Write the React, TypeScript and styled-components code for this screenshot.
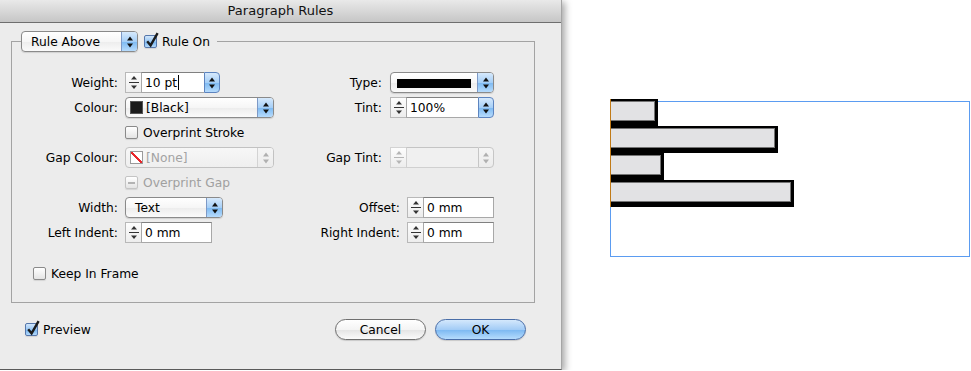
import { createGlobalStyle, css, styled } from "styled-components";

const GlobalStyle = createGlobalStyle`
  body {
    margin: 0;
    background: #fff;
    color: #000;
    font-family: "DejaVu Sans", "Liberation Sans", sans-serif;
    font-size: 12.25px;
  }
`;

const Page = styled.div`
  display: flex;
  align-items: flex-start;
`;

const Window = styled.div`
  width: 562px;
  height: 370px;
  box-sizing: border-box;
  display: flex;
  flex-direction: column;
  background: #ececec;
  border-right: 1px solid #a5a5a5;
  border-bottom: 1px solid #5a5a5a;
  box-shadow: 3px 2px 7px rgba(0, 0, 0, 0.35);
`;

const TitleBar = styled.div`
  height: 22px;
  border-bottom: 1px solid #6e6e6e;
  background: linear-gradient(#e9e9e9, #c6c6c6);
  text-align: center;
  line-height: 22px;
  font-size: 13px;
  color: #111;
`;

const Body = styled.div`
  padding: 8px 26px 0 11px;
`;

const Group = styled.fieldset`
  margin: 0;
  padding: 18px 0 16px;
  min-width: 0;
  border: 1px solid #a3a3a3;
`;

const GroupHead = styled.legend`
  margin-left: 9px;
  padding: 0 7px 0 0;
`;

const HeadInner = styled.div`
  display: flex;
  align-items: center;
  gap: 6px;
`;

const Row = styled.div<{ $cols: string }>`
  display: grid;
  grid-template-columns: ${(p) => p.$cols};
  align-items: center;
  height: 25px;
`;

const Label = styled.label<{ $pad?: number }>`
  text-align: right;
  padding-right: ${(p) => p.$pad ?? 7}px;
  white-space: nowrap;
  color: #000;
`;

const Cell = styled.div`
  display: flex;
  align-items: center;
`;

const Popup = styled.div<{ $w: number; $disabled?: boolean }>`
  width: ${(p) => p.$w}px;
  height: 21px;
  box-sizing: border-box;
  display: flex;
  align-items: stretch;
  border: 1px solid ${(p) => (p.$disabled ? "#c2c2c2" : "#8a8a8a")};
  border-radius: 4px;
  overflow: hidden;
  background: linear-gradient(#ffffff, #f6f6f6 50%, #ececec 51%, #fafafa);
  box-shadow: 0 1px 1px rgba(0, 0, 0, 0.12);
  color: ${(p) => (p.$disabled ? "#a3a3a3" : "#000")};
  ${(p) =>
    p.$disabled &&
    css`
      background: linear-gradient(#f7f7f7, #efefef);
      box-shadow: none;
    `}
`;

const PopupText = styled.span<{ $pad?: number }>`
  flex: 1;
  display: flex;
  align-items: center;
  gap: 3px;
  padding-left: ${(p) => p.$pad ?? 9}px;
  white-space: nowrap;
`;

const ArrowCap = styled.span<{ $disabled?: boolean; $joined?: boolean }>`
  width: 16px;
  flex: none;
  display: flex;
  align-items: center;
  justify-content: center;
  box-sizing: border-box;
  border-left: 1px solid #7d99c6;
  background: linear-gradient(#d6e9fc, #a6cff7 50%, #7cb9f2 51%, #b6dbfc);
  ${(p) =>
    p.$disabled &&
    css`
      border-left: 1px solid #d3d3d3;
      background: linear-gradient(#f5f5f5, #ececec);
    `}
  ${(p) =>
    p.$joined &&
    css`
      height: 21px;
      border: 1px solid ${p.$disabled ? "#c6c6c6" : "#5d84bf"};
      border-radius: 0 4px 4px 0;
    `}
`;

const Stepper = styled.span<{ $disabled?: boolean }>`
  width: 16px;
  height: 21px;
  box-sizing: border-box;
  flex: none;
  display: flex;
  align-items: center;
  justify-content: center;
  border: 1px solid ${(p) => (p.$disabled ? "#d3d3d3" : "#b8b8b8")};
  border-right: none;
  background: linear-gradient(#fdfdfd, #ededed);
`;

const TextField = styled.span<{ $w: number; $disabled?: boolean; $joined?: boolean }>`
  width: ${(p) => p.$w}px;
  height: 21px;
  box-sizing: border-box;
  display: flex;
  align-items: center;
  padding-left: 3px;
  border: 1px solid ${(p) => (p.$disabled ? "#d0d0d0" : "#a8a8a8")};
  border-top-color: ${(p) => (p.$disabled ? "#c4c4c4" : "#808080")};
  border-right: ${(p) => (p.$joined ? "none" : undefined)};
  background: ${(p) => (p.$disabled ? "#f0f0f0" : "#fff")};
`;

const Caret = styled.span`
  display: inline-block;
  width: 1px;
  height: 15px;
  margin-left: 1px;
  background: #000;
`;

const Swatch = styled.span<{ $none?: boolean }>`
  width: 13px;
  height: 13px;
  box-sizing: border-box;
  flex: none;
  border: 1px solid ${(p) => (p.$none ? "#9a9a9a" : "#555")};
  background: ${(p) =>
    p.$none
      ? "linear-gradient(to top right, #fff 44%, #e8262a 45%, #e8262a 57%, #fff 58%)"
      : "#1c1c1c"};
`;

const StrokeSample = styled.span`
  display: block;
  width: 74px;
  height: 9px;
  margin-top: 1px;
  background: #000;
`;

const CheckLine = styled.label<{ $disabled?: boolean; $inset?: number }>`
  display: flex;
  align-items: center;
  gap: 5px;
  padding-left: ${(p) => p.$inset ?? 0}px;
  color: ${(p) => (p.$disabled ? "#a0a0a0" : "#000")};
  white-space: nowrap;
`;

const Box = styled.span<{ $checked?: boolean; $disabled?: boolean }>`
  position: relative;
  width: 13px;
  height: 13px;
  box-sizing: border-box;
  flex: none;
  display: flex;
  align-items: center;
  justify-content: center;
  border: 1px solid ${(p) => (p.$disabled ? "#c4c4c4" : "#8a8a8a")};
  border-radius: 2px;
  background: linear-gradient(#ffffff, #e4e4e4);
  box-shadow: 0 1px 1px rgba(0, 0, 0, 0.1);
  ${(p) =>
    p.$checked &&
    css`
      border-color: #5677ab;
      background: linear-gradient(#d2e6fb, #98c7f4 50%, #74b3ef 51%, #b3d9fb);
    `}
`;

const Tick = styled.svg`
  position: absolute;
  left: 0;
  top: -4px;
  overflow: visible;
`;

const Dash = styled.span`
  width: 7px;
  height: 2px;
  background: #b3b3b3;
`;

const KeepRow = styled.div`
  display: flex;
  align-items: center;
  height: 25px;
  margin-top: 16px;
`;

const Footer = styled.div`
  display: flex;
  align-items: center;
  height: 21px;
  margin-top: 16px;
  padding: 0 9px 0 14px;
`;

const Buttons = styled.div`
  margin-left: auto;
  display: flex;
  gap: 9px;
`;

const PushButton = styled.button<{ $primary?: boolean }>`
  width: 91px;
  height: 21px;
  padding: 0;
  border: 1px solid #6f6f6f;
  border-radius: 11px;
  font: inherit;
  color: #000;
  background: linear-gradient(#ffffff, #f4f4f4 50%, #e3e3e3 51%, #fbfbfb);
  box-shadow: 0 1px 1px rgba(0, 0, 0, 0.15);
  ${(p) =>
    p.$primary &&
    css`
      border-color: #4a6ea8;
      background: linear-gradient(#d4e8fc, #a3ccf6 50%, #7ab7f1 51%, #b6dcfd);
    `}
`;

const Canvas = styled.div`
  margin: 101px 0 0 48px;
  width: 360px;
  height: 156px;
  box-sizing: border-box;
  border: 1px solid #5b9cf1;
`;

const Lines = styled.div`
  width: max-content;
  margin: -3px 0 0 -1px;
  display: flex;
  flex-direction: column;
  align-items: flex-start;
  border-left: 1px solid #c07a18;
`;

const RuleBar = styled.div`
  height: 27px;
  box-sizing: border-box;
  padding: 2px 3px 5px 0;
  background: #000;
`;

const TextBand = styled.div`
  height: 100%;
  box-sizing: border-box;
  background: #e2e2e4;
  border: 1px solid #747474;
  border-left: none;
`;

function Arrows({ disabled }: { disabled?: boolean }) {
  const c = disabled ? "#b0b0b0" : "#111";
  return (
    <svg width="6" height="12" viewBox="0 0 6 12">
      <polygon points="0,4.5 3,0.5 6,4.5" fill={c} />
      <polygon points="0,7.5 6,7.5 3,11.5" fill={c} />
    </svg>
  );
}

function StepIcon({ disabled }: { disabled?: boolean }) {
  const c = disabled ? "#b5b5b5" : "#333";
  return (
    <svg width="12" height="17" viewBox="0 0 12 17">
      <polygon points="3,5.5 6,2 9,5.5" fill={c} />
      <rect x="1" y="8" width="10" height="1" fill={c} />
      <polygon points="3,11.5 9,11.5 6,15" fill={c} />
    </svg>
  );
}

function Check({
  label,
  checked,
  mixed,
  disabled,
  inset,
}: {
  label: string;
  checked?: boolean;
  mixed?: boolean;
  disabled?: boolean;
  inset?: number;
}) {
  return (
    <CheckLine $disabled={disabled} $inset={inset}>
      <Box $checked={checked} $disabled={disabled}>
        {checked && (
          <Tick width="14" height="16" viewBox="0 0 14 16">
            <path
              d="M2.2 9.2 L5.6 13.4 L12.6 1.2"
              fill="none"
              stroke="#1b1b1b"
              strokeWidth="2.4"
            />
          </Tick>
        )}
        {mixed && <Dash />}
      </Box>
      {label}
    </CheckLine>
  );
}

function NumberField({
  value,
  width,
  combo,
  disabled,
  caret,
}: {
  value: string;
  width: number;
  combo?: boolean;
  disabled?: boolean;
  caret?: boolean;
}) {
  return (
    <Cell>
      <Stepper $disabled={disabled}>
        <StepIcon disabled={disabled} />
      </Stepper>
      <TextField $w={width} $disabled={disabled} $joined={combo}>
        {value}
        {caret && <Caret />}
      </TextField>
      {combo && (
        <ArrowCap $joined $disabled={disabled}>
          <Arrows disabled={disabled} />
        </ArrowCap>
      )}
    </Cell>
  );
}

const TOP_COLS = "113px 149px 116px 104px";
const LOWER_COLS = "113px 149px 133px 87px";

const lines = [47, 167, 53, 183];

export default function App() {
  return (
    <Page>
      <GlobalStyle />
      <Window>
        <TitleBar>Paragraph Rules</TitleBar>
        <Body>
          <Group>
            <GroupHead>
              <HeadInner>
                <Popup $w={117}>
                  <PopupText>Rule Above</PopupText>
                  <ArrowCap>
                    <Arrows />
                  </ArrowCap>
                </Popup>
                <Check label="Rule On" checked />
              </HeadInner>
            </GroupHead>

            <Row $cols={TOP_COLS}>
              <Label>Weight:</Label>
              <NumberField value="10 pt" width={63} combo caret />
              <Label $pad={8}>Type:</Label>
              <Popup $w={104}>
                <PopupText $pad={6}>
                  <StrokeSample />
                </PopupText>
                <ArrowCap>
                  <Arrows />
                </ArrowCap>
              </Popup>
            </Row>
            <Row $cols={TOP_COLS}>
              <Label>Colour:</Label>
              <Popup $w={149}>
                <PopupText $pad={4}>
                  <Swatch />
                  [Black]
                </PopupText>
                <ArrowCap>
                  <Arrows />
                </ArrowCap>
              </Popup>
              <Label $pad={8}>Tint:</Label>
              <NumberField value="100%" width={74} combo />
            </Row>
            <Row $cols={TOP_COLS}>
              <span />
              <Check label="Overprint Stroke" />
            </Row>
            <Row $cols={TOP_COLS}>
              <Label>Gap Colour:</Label>
              <Popup $w={149} $disabled>
                <PopupText $pad={4}>
                  <Swatch $none />
                  [None]
                </PopupText>
                <ArrowCap $disabled>
                  <Arrows disabled />
                </ArrowCap>
              </Popup>
              <Label $pad={8}>Gap Tint:</Label>
              <NumberField value="" width={74} combo disabled />
            </Row>
            <Row $cols={TOP_COLS}>
              <span />
              <Check label="Overprint Gap" mixed disabled />
            </Row>
            <Row $cols={LOWER_COLS}>
              <Label>Width:</Label>
              <Popup $w={98}>
                <PopupText>Text</PopupText>
                <ArrowCap>
                  <Arrows />
                </ArrowCap>
              </Popup>
              <Label>Offset:</Label>
              <NumberField value="0 mm" width={71} />
            </Row>
            <Row $cols={LOWER_COLS}>
              <Label>Left Indent:</Label>
              <NumberField value="0 mm" width={71} />
              <Label>Right Indent:</Label>
              <NumberField value="0 mm" width={71} />
            </Row>

            <KeepRow>
              <Check label="Keep In Frame" inset={21} />
            </KeepRow>
          </Group>

          <Footer>
            <Check label="Preview" checked />
            <Buttons>
              <PushButton>Cancel</PushButton>
              <PushButton $primary>OK</PushButton>
            </Buttons>
          </Footer>
        </Body>
      </Window>

      <Canvas>
        <Lines>
          {lines.map((w, i) => (
            <RuleBar key={i} style={{ width: w }}>
              <TextBand />
            </RuleBar>
          ))}
        </Lines>
      </Canvas>
    </Page>
  );
}
